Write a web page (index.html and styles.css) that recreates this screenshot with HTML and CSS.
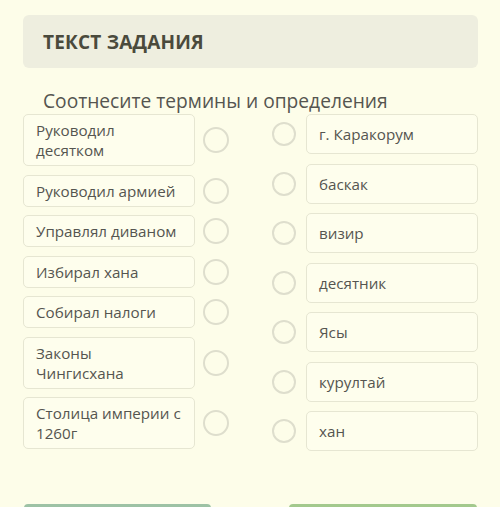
FILE: index.html
```html
<!DOCTYPE html>
<html lang="ru">
<head>
<meta charset="utf-8">
<link rel="stylesheet" href="styles.css">
</head>
<body>
<div class="page">
  <div class="header"><h1 class="title">ТЕКСТ ЗАДАНИЯ</h1></div>
  <p class="question">Соотнесите термины и определения</p>
  <div class="match">
    <div class="col col-left">
      <div class="item"><div class="box">Руководил десятком</div><span class="dot"></span></div>
      <div class="item"><div class="box">Руководил армией</div><span class="dot"></span></div>
      <div class="item"><div class="box">Управлял диваном</div><span class="dot"></span></div>
      <div class="item"><div class="box">Избирал хана</div><span class="dot"></span></div>
      <div class="item"><div class="box">Собирал налоги</div><span class="dot"></span></div>
      <div class="item"><div class="box">Законы Чингисхана</div><span class="dot"></span></div>
      <div class="item"><div class="box">Столица империи с 1260г</div><span class="dot"></span></div>
    </div>
    <div class="col col-right">
      <div class="item"><span class="dot"></span><div class="box">г. Каракорум</div></div>
      <div class="item"><span class="dot"></span><div class="box">баскак</div></div>
      <div class="item"><span class="dot"></span><div class="box">визир</div></div>
      <div class="item"><span class="dot"></span><div class="box">десятник</div></div>
      <div class="item"><span class="dot"></span><div class="box">Ясы</div></div>
      <div class="item"><span class="dot"></span><div class="box">курултай</div></div>
      <div class="item"><span class="dot"></span><div class="box">хан</div></div>
    </div>
  </div>
  <div class="actions">
    <div class="btn btn-prev"></div>
    <div class="btn btn-next"></div>
  </div>
</div>
</body>
</html>
```
FILE: styles.css
```css
html, body {
  margin: 0;
  padding: 0;
  background: #fdfde9;
  height: 507px;
  overflow: hidden;
}
.page {
  font-family: "Open Sans", "Noto Sans", sans-serif;
  padding: 15px 22px 0 23px;
  width: 455px;
}
.header {
  height: 53px;
  background: #eeeedf;
  border-radius: 6px;
  display: flex;
  align-items: center;
  padding-left: 20px;
}
.title {
  margin: 0;
  font-size: 19px;
  font-weight: 700;
  color: #4a4a3c;
  letter-spacing: 0.2px;
}
.question {
  margin: 21px 0 1px 20px;
  font-size: 19.2px;
  line-height: 24px;
  color: #555550;
}
.match {
  display: grid;
  grid-template-columns: 206px 206px;
  column-gap: 43px;
}
.col {
  display: flex;
  flex-direction: column;
}
.col-left {
  gap: 8.5px;
}
.col-right {
  gap: 9.5px;
}
.item {
  display: flex;
  align-items: center;
}
.col-left .item {
  gap: 8px;
}
.col-right .item {
  gap: 10px;
}
.box {
  width: 172px;
  box-sizing: border-box;
  border: 1px solid #e6e6d2;
  border-radius: 5px;
  background: #fefeed;
  font-size: 15.2px;
  line-height: 20px;
  color: #555550;
  padding: 5px 13px 5px 12px;
}
.col-right .box {
  padding: 9px 12px;
}
.dot {
  flex: none;
  width: 26px;
  height: 26px;
  box-sizing: border-box;
  border: 2px solid #dedecd;
  border-radius: 50%;
}
.col-right .dot {
  width: 24px;
  height: 24px;
}
.actions {
  display: flex;
  justify-content: space-between;
  margin-top: 53px;
  padding: 0 1px 0 1px;
}
.btn {
  height: 40px;
  border-radius: 4px;
}
.btn-prev {
  width: 187px;
  background: #9dc2a5;
}
.btn-next {
  width: 188px;
  background: #a3c98d;
}
```
